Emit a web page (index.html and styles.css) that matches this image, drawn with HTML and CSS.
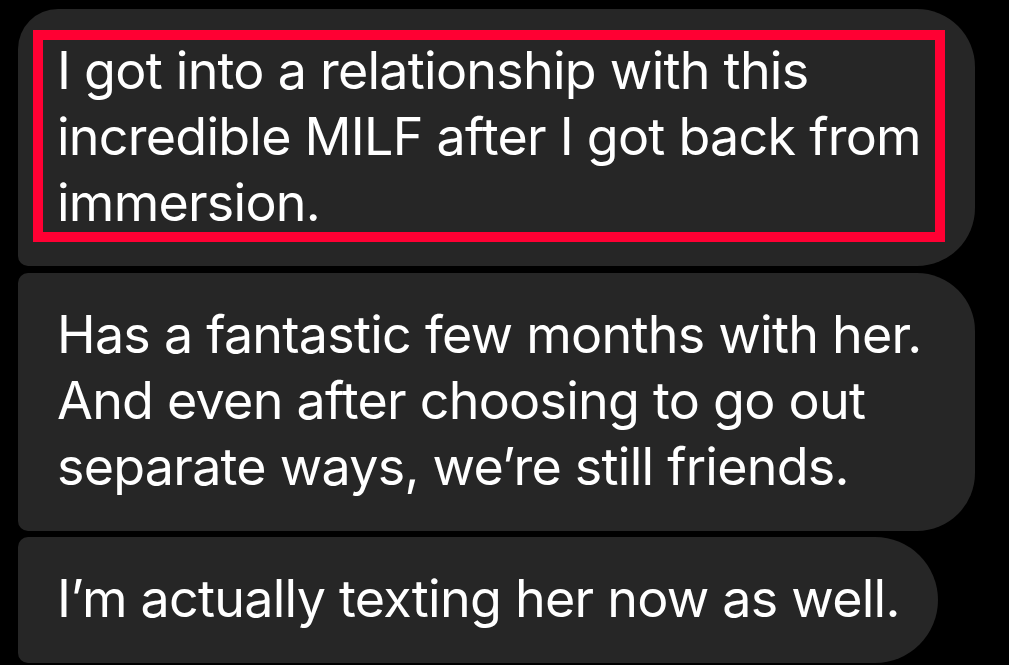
FILE: index.html
```html
<!DOCTYPE html>
<html lang="en">
<head>
<meta charset="utf-8">
<link rel="stylesheet" href="styles.css">
</head>
<body>
<div class="thread">
  <div class="bubble first wide">
    <p class="msg">I got into a relationship with this<br>incredible MILF after I got back from<br>immersion.</p>
    <div class="highlight"></div>
  </div>
  <div class="bubble middle wide">
    <p class="msg">Has a fantastic few months with her.<br>And even after choosing to go out<br>separate ways, we’re still friends.</p>
  </div>
  <div class="bubble last narrow">
    <p class="msg">I’m actually texting her now as well.</p>
  </div>
</div>
</body>
</html>
```
FILE: styles.css
```css
html, body {
  margin: 0;
  padding: 0;
  background: #000;
}
body {
  width: 1009px;
  height: 665px;
  overflow: hidden;
}
.thread {
  display: flex;
  flex-direction: column;
  align-items: flex-start;
  padding: 9px 0 0 18px;
}
.bubble {
  position: relative;
  box-sizing: border-box;
  background: #262626;
  padding: 29px 20px 30px 39px;
}
.wide { width: 957px; }
.narrow { width: 920px; }
.first {
  border-radius: 40px 58px 58px 10px;
}
.middle {
  margin-top: 7px;
  height: 258px;
  border-radius: 10px 58px 58px 10px;
}
.last {
  margin-top: 6px;
  height: 126px;
  border-radius: 10px 63px 63px 10px;
}
.msg {
  margin: 0;
  font-family: "Inter", "Liberation Sans", sans-serif;
  font-size: 52px;
  letter-spacing: -0.75px;
  line-height: 66px;
  color: #fff;
  white-space: nowrap;
}
.highlight {
  position: absolute;
  left: 15px;
  top: 21px;
  right: 30px;
  bottom: 24px;
  border: 10px solid #ff0033;
}
```
